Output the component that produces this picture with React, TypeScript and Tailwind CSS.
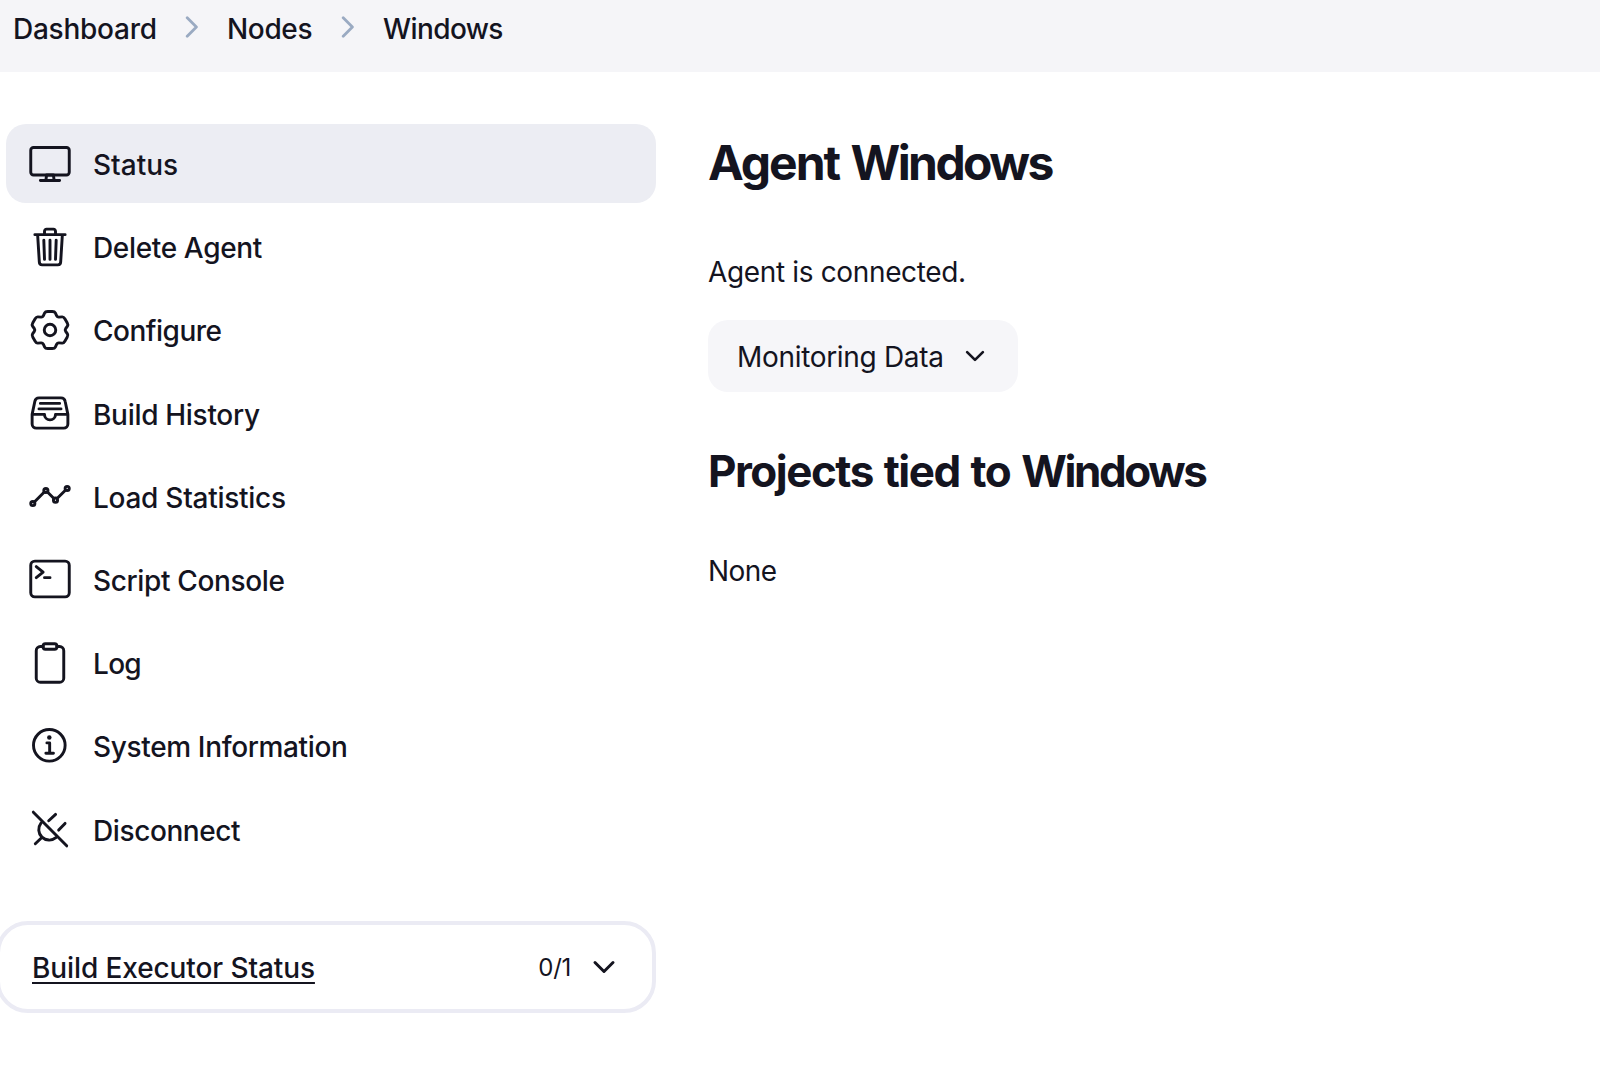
import React from "react";

// Six-lobed cog outline with softened vertices, centred in a 512 unit box.
function cogPath() {
  const pts: [number, number][] = [];
  for (let k = 0; k < 6; k++) {
    const a = (k * Math.PI) / 3;
    for (const [x, y] of [[-54, -215], [54, -215], [86, -149]]) {
      pts.push([256 + x * Math.cos(a) - y * Math.sin(a), 256 + x * Math.sin(a) + y * Math.cos(a)]);
    }
  }
  const n = pts.length;
  return (
    pts
      .map(([x, y], i) => {
        const p = pts[(i + n - 1) % n];
        const q = pts[(i + 1) % n];
        const t = 0.25;
        const f = (v: number) => v.toFixed(1);
        return `${i ? "L" : "M"}${f(x + (p[0] - x) * t)} ${f(y + (p[1] - y) * t)}Q${f(x)} ${f(y)} ${f(x + (q[0] - x) * t)} ${f(y + (q[1] - y) * t)}`;
      })
      .join("") + "Z"
  );
}

const icons: Record<string, React.ReactNode> = {
  desktop: (
    <>
      <rect x="32" y="64" width="448" height="320" rx="32" />
      <path d="M304 448l-8-64h-80l-8 64h96zM368 448H144" />
    </>
  ),
  trash: (
    <path d="M112 112l20 320c.95 18.49 14.4 32 32 32h184c17.67 0 30.87-13.51 32-32l20-320M80 112h352M192 112V72a23.93 23.93 0 0124-24h80a23.93 23.93 0 0124 24v40M256 176v224M184 176l8 224M328 176l-8 224" />
  ),
  gear: (
    <>
      <path d={cogPath()} />
      <circle cx="256" cy="256" r="67" />
    </>
  ),
  tray: (
    <path d="M384 80H128c-26 0-43 14-48 40L48 272v112a48.14 48.14 0 0048 48h320a48.14 48.14 0 0048-48V272l-32-152c-5-27-23-40-48-40zM48 272h144M320 272h144M192 272a64 64 0 00128 0M144 144h224M128 208h256" />
  ),
  analytics: (
    <>
      <path d="M344 280l88-88M232 216l64 64M80 320l104-104" />
      <circle cx="456" cy="168" r="24" />
      <circle cx="320" cy="304" r="24" />
      <circle cx="208" cy="192" r="24" />
      <circle cx="56" cy="344" r="24" />
    </>
  ),
  terminal: (
    <>
      <rect x="32" y="48" width="448" height="416" rx="48" />
      <path d="M96 112l80 64-80 64M192 240h64" />
    </>
  ),
  clipboard: (
    <>
      <path d="M336 64h32a48 48 0 0148 48v320a48 48 0 01-48 48H144a48 48 0 01-48-48V112a48 48 0 0148-48h32" />
      <rect x="176" y="32" width="160" height="64" rx="26" />
    </>
  ),
  info: (
    <>
      <path d="M248 64C146.39 64 64 146.39 64 248s82.39 184 184 184 184-82.39 184-184S349.61 64 248 64zM220 220h32v116M208 340h88" />
      <circle cx="248" cy="156" r="26" fill="currentColor" stroke="none" />
    </>
  ),
  unplug: (
    <path d="M62 60l388 392M241 160l80-74M357 269l74-78M151 188A122 122 0 0 0 325 357M85 428l70-68" />
  ),
};

const items = [
  { icon: "desktop", label: "Status", text: "tracking-[0px]" },
  { icon: "trash", label: "Delete Agent", text: "tracking-[-0.35px]" },
  { icon: "gear", label: "Configure", text: "tracking-[-0.5px]" },
  { icon: "tray", label: "Build History", text: "tracking-[-0.3px]" },
  { icon: "analytics", label: "Load Statistics", text: "tracking-[-0.27px]" },
  { icon: "terminal", label: "Script Console", text: "tracking-[-0.36px]" },
  { icon: "clipboard", label: "Log", text: "tracking-[-0.7px]" },
  { icon: "info", label: "System Information", text: "tracking-[-0.35px]" },
  { icon: "unplug", label: "Disconnect", text: "tracking-[-0.4px]" },
];

function Icon({ name }: { name: string }) {
  return (
    <svg className="size-11 shrink-0" viewBox="0 0 512 512" fill="none" stroke="currentColor" strokeWidth="34" strokeLinecap="round" strokeLinejoin="round">
      {icons[name]}
    </svg>
  );
}

function Chevron({ className, width = 48 }: { className: string; width?: number }) {
  return (
    <svg className={className} viewBox="0 0 512 512" fill="none" stroke="currentColor" strokeWidth={width} strokeLinecap="round" strokeLinejoin="round">
      <path d="M112 184l144 144 144-144" />
    </svg>
  );
}

function Separator() {
  return (
    <svg className="h-[22px] w-[13px] shrink-0 text-[#9aaac2]" viewBox="0 0 13 22" fill="none" stroke="currentColor" strokeWidth="2.8" strokeLinecap="round" strokeLinejoin="round">
      <path d="M2.2 1.8l9.2 9.2-9.2 9.2" />
    </svg>
  );
}

export default function App() {
  return (
    <div className="h-[1088px] w-full overflow-hidden bg-white font-['Inter',sans-serif] text-[28px] leading-[40px] text-[#14141f]">
      <nav className="flex h-[72px] items-start bg-[#f5f5f8] pt-[9px] pl-[13px] font-medium">
        <a className="w-[172px] tracking-[-0.25px]">Dashboard</a>
        <span className="w-[42px] pt-[7px]"><Separator /></span>
        <a className="w-[114px] tracking-[-0.35px]">Nodes</a>
        <span className="w-[42px] pt-[7px]"><Separator /></span>
        <a className="tracking-[-0.6px]">Windows</a>
      </nav>
      <div className="flex pt-[52px]">
        <aside className="w-[656px] shrink-0">
          <ul className="flex flex-col gap-[4.2px] pl-[6px]">
            {items.map((item, i) => (
              <li key={item.label} className={`flex h-[79px] items-center gap-[21px] rounded-[20px] pl-[22px] font-medium ${i === 0 ? "bg-[#ecedf3]" : ""}`}>
                <Icon name={item.icon} />
                <span className={`pt-[3px] ${item.text}`}>{item.label}</span>
              </li>
            ))}
          </ul>
          <section className="mt-[52.2px] -ml-[4px] flex h-[92px] w-[660px] items-center rounded-[32px] border-4 border-[#ebebf4] pl-8">
            <a className="pt-[2px] font-medium tracking-[-0.1px] underline decoration-2 underline-offset-[4px]">Build Executor Status</a>
            <span className="ml-auto pt-[2px] text-2xl leading-[40px] tracking-[-0.3px]">0/1</span>
            <Chevron className="mr-[32px] ml-[17px] size-8" width={48} />
          </section>
        </aside>
        <main className="pl-[52px]">
          <h1 className="pt-[14px] text-[48px] leading-[50px] font-bold tracking-[-2px] [word-spacing:2px]">
            Agent <span className="tracking-[-2.6px]">Windows</span>
          </h1>
          <p className="mt-[64px] tracking-[-0.35px]">Agent is connected.</p>
          <button className="mt-[28px] flex h-[72px] w-[310px] items-center rounded-[20px] bg-[#f6f6f9] pl-[29px]">
            <span className="pt-[2px] tracking-[-0.32px]">Monitoring Data</span>
            <Chevron className="ml-[17px] size-7" />
          </button>
          <h2 className="mt-[54px] text-[44px] leading-[50px] font-bold tracking-[-1.5px] [word-spacing:2px]">
            Projects tied to <span className="tracking-[-2.4px]">Windows</span>
          </h2>
          <p className="mt-[55px] tracking-[-0.6px]">None</p>
        </main>
      </div>
    </div>
  );
}
